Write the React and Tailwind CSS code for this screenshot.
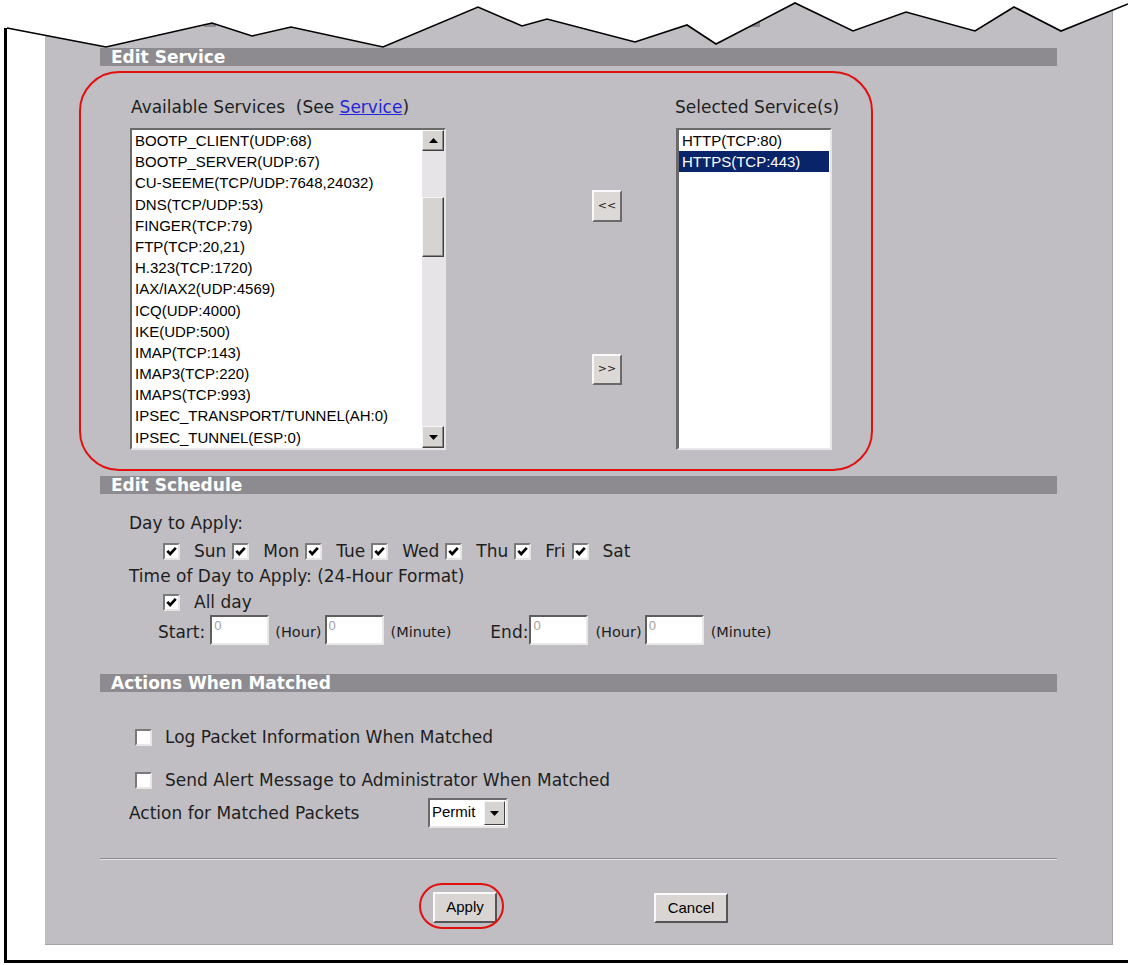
import React from "react";

const services = [
  "BOOTP_CLIENT(UDP:68)",
  "BOOTP_SERVER(UDP:67)",
  "CU-SEEME(TCP/UDP:7648,24032)",
  "DNS(TCP/UDP:53)",
  "FINGER(TCP:79)",
  "FTP(TCP:20,21)",
  "H.323(TCP:1720)",
  "IAX/IAX2(UDP:4569)",
  "ICQ(UDP:4000)",
  "IKE(UDP:500)",
  "IMAP(TCP:143)",
  "IMAP3(TCP:220)",
  "IMAPS(TCP:993)",
  "IPSEC_TRANSPORT/TUNNEL(AH:0)",
  "IPSEC_TUNNEL(ESP:0)",
];

const LAB = "font-['DejaVu_Sans',sans-serif] text-[17px] leading-[20px] text-[#1e1e1e] whitespace-nowrap";
const SMALL = "font-['DejaVu_Sans',sans-serif] text-[14.5px] leading-[20px] text-[#1e1e1e] whitespace-nowrap";

function Header({ children, top }) {
  return (
    <div
      className={
        "ml-[55px] w-[957px] h-[18px] shrink-0 bg-[#8d8b8f] pl-[11px] text-white font-bold text-[17px] leading-[18px] font-['DejaVu_Sans',sans-serif] whitespace-nowrap " +
        top
      }
    >
      {children}
    </div>
  );
}

function Checkbox({ checked }) {
  return (
    <div className="w-[17px] h-[17px] shrink-0 bg-white border-2 border-t-[#7a7a7a] border-l-[#7a7a7a] border-r-[#e6e6e6] border-b-[#e6e6e6] flex items-center justify-center">
      {checked && (
        <svg width="11" height="11" viewBox="0 0 11 11">
          <path d="M1.3 4.8 L4.2 8 L9.8 1.8" fill="none" stroke="#000" strokeWidth="2.7" />
        </svg>
      )}
    </div>
  );
}

function Arrow({ up }) {
  return (
    <svg width="9" height="5" viewBox="0 0 9 5">
      {up ? <path d="M0 5 L4.5 0 L9 5 Z" fill="#000" /> : <path d="M0 0 L4.5 5 L9 0 Z" fill="#000" />}
    </svg>
  );
}

function ScrollBtn({ up, h }) {
  return (
    <div
      className={
        "w-[22px] shrink-0 bg-[#d6d3d0] border border-t-[#f6f6f6] border-l-[#f6f6f6] border-r-[#404040] border-b-[#404040] shadow-[inset_-1px_-1px_0_#8a8a8a] flex items-center justify-center " +
        h
      }
    >
      <Arrow up={up} />
    </div>
  );
}

function TextBox({ className }) {
  return (
    <div
      className={
        "w-[59px] h-[30px] shrink-0 bg-white border-2 border-t-[#5e5e5e] border-l-[#5e5e5e] border-r-[#e8e8e8] border-b-[#e8e8e8] pl-[2px] pt-[1px] font-['Liberation_Sans',sans-serif] text-[13px] leading-[16px] text-[#a0a0a0] " +
        className
      }
    >
      0
    </div>
  );
}

function SmallBtn({ children, h }) {
  return (
    <div
      className={
        "w-[30px] bg-[#dbd8d5] border-2 border-t-[#fafafa] border-l-[#fafafa] border-r-[#6a6a6a] border-b-[#6a6a6a] flex items-center justify-center font-['DejaVu_Sans',sans-serif] text-[11px] text-[#222] " +
        h
      }
    >
      {children}
    </div>
  );
}

function Torn() {
  const pts = [
    [7, 28],
    [106, 47],
    [212, 23],
    [252, 36],
    [291, 27],
    [383, 47],
    [478, 7],
    [522, 26],
    [547, 19],
    [635, 42],
    [687, 25],
    [716, 44],
    [795, 3],
    [853, 31],
    [906, 12],
    [975, 31],
    [1014, 7],
    [1061, 31],
    [1128, 4],
  ];
  const line = pts.map((p) => p.join(",")).join(" ");
  const poly = "0,0 1128,0 " + [...pts].reverse().map((p) => p.join(",")).join(" ") + " 0,28";
  return (
    <svg className="absolute top-0 left-0 pointer-events-none" width="1128" height="52" viewBox="0 0 1128 52">
      <rect x="204" y="21" width="12" height="6" fill="#8d8b8f" />
      <rect x="748" y="21" width="12" height="6" fill="#8d8b8f" />
      <polygon points={poly} fill="#ffffff" />
      <polyline points={line} fill="none" stroke="#000" strokeWidth="1.6" strokeLinejoin="miter" />
    </svg>
  );
}

export default function App() {
  return (
    <div className="relative w-[1128px] h-[965px] bg-white overflow-hidden">
      <div className="ml-[4px] w-[1124px] h-[963px] border-l-[3px] border-b-[3px] border-black">
        <div className="ml-[38px] w-[1068px] h-[945px] bg-[#c0bec3] border-r border-b border-[#a6a4a8] flex flex-col">
          <Header top="mt-[48px]">Edit Service</Header>

          <div className="mt-[5px] ml-[34px] w-[794px] h-[400px] shrink-0 border-2 border-[#e20f0f] rounded-[40px] flex items-start pt-[24px] pl-[49px]">
            <div className="w-[316px] shrink-0 flex flex-col">
              <div className={LAB + " pl-[1px]"}>
                Available Services&nbsp; (See{" "}
                <span className="text-[#2424d8] underline">Service</span>)
              </div>
              <div className="mt-[11px] w-[316px] h-[322px] bg-white border-2 border-t-[#6a6a6a] border-l-[#6a6a6a] border-r-[#e6e6e6] border-b-[#e6e6e6] flex">
                <div className="flex-1 flex flex-col">
                  {services.map((s) => (
                    <div
                      key={s}
                      className="h-[21.2px] leading-[21.2px] pl-[3px] font-['Liberation_Sans',sans-serif] text-[15px] text-black whitespace-nowrap"
                    >
                      {s}
                    </div>
                  ))}
                </div>
                <div className="w-[22px] flex flex-col bg-[#e6e4e7]">
                  <ScrollBtn up h="h-[21px]" />
                  <div className="h-[46px]" />
                  <div className="w-[22px] h-[60px] bg-[#d6d3d0] border border-t-[#f6f6f6] border-l-[#f6f6f6] border-r-[#404040] border-b-[#404040] shadow-[inset_-1px_-1px_0_#8a8a8a]" />
                  <div className="flex-1" />
                  <ScrollBtn h="h-[22px]" />
                </div>
              </div>
            </div>

            <div className="ml-[146px] w-[30px] shrink-0 flex flex-col">
              <SmallBtn h="mt-[93px] h-[32px]">&lt;&lt;</SmallBtn>
              <SmallBtn h="mt-[132px] h-[31px]">&gt;&gt;</SmallBtn>
            </div>

            <div className="ml-[53px] shrink-0 flex flex-col">
              <div className={LAB}>Selected Service(s)</div>
              <div className="mt-[11px] ml-[1px] w-[156px] h-[322px] bg-white border-2 border-l-[3px] border-t-[#6a6a6a] border-l-[#6a6a6a] border-r-[#e6e6e6] border-b-[#e6e6e6] flex flex-col pr-[1px]">
                <div className="h-[21px] leading-[21px] pl-[3px] font-['Liberation_Sans',sans-serif] text-[15px] text-black whitespace-nowrap">
                  HTTP(TCP:80)
                </div>
                <div className="h-[21px] leading-[21px] pl-[3px] bg-[#0a246a] font-['Liberation_Sans',sans-serif] text-[15px] text-white whitespace-nowrap">
                  HTTPS(TCP:443)
                </div>
              </div>
            </div>
          </div>

          <Header top="mt-[5px]">Edit Schedule</Header>

          <div className={LAB + " mt-[19px] ml-[84px]"}>Day to Apply:</div>

          <div className="mt-[8px] ml-[118px] h-[20px] flex items-center">
            {["Sun", "Mon", "Tue", "Wed", "Thu", "Fri", "Sat"].map((d) => (
              <div key={d} className="flex items-center mr-[6px]">
                <Checkbox checked />
                <span className={LAB + " ml-[14px]"}>{d}</span>
              </div>
            ))}
          </div>

          <div className={LAB + " mt-[5px] ml-[84px]"}>Time of Day to Apply: (24-Hour Format)</div>

          <div className="mt-[6px] ml-[118px] h-[20px] flex items-center">
            <Checkbox checked />
            <span className={LAB + " ml-[14px]"}>All day</span>
          </div>

          <div className="mt-[3px] ml-[113px] h-[30px] flex items-center">
            <span className={LAB + " pt-[3px]"}>Start:</span>
            <TextBox className="ml-[5px]" />
            <span className={SMALL + " ml-[6px] pt-[3px]"}>(Hour)</span>
            <TextBox className="ml-[3px]" />
            <span className={SMALL + " ml-[7px] pt-[3px]"}>(Minute)</span>
            <span className={LAB + " ml-[39px] pt-[3px]"}>End:</span>
            <TextBox className="ml-[1px]" />
            <span className={SMALL + " ml-[7px] pt-[3px]"}>(Hour)</span>
            <TextBox className="ml-[3px]" />
            <span className={SMALL + " ml-[7px] pt-[3px]"}>(Minute)</span>
          </div>

          <Header top="mt-[29px]">Actions When Matched</Header>

          <div className="mt-[35px] ml-[90px] h-[20px] flex items-center">
            <Checkbox />
            <span className={LAB + " ml-[13px]"}>Log Packet Information When Matched</span>
          </div>

          <div className="mt-[23px] ml-[90px] h-[20px] flex items-center">
            <Checkbox />
            <span className={LAB + " ml-[13px]"}>Send Alert Message to Administrator When Matched</span>
          </div>

          <div className="mt-[8px] ml-[84px] h-[30px] flex items-center">
            <span className={LAB + " w-[299px]"}>Action for Matched Packets</span>
            <div className="w-[80px] h-[30px] bg-white border-2 border-t-[#6a6a6a] border-l-[#6a6a6a] border-r-[#e6e6e6] border-b-[#e6e6e6] flex items-stretch">
              <div className="flex-1 pl-[2px] font-['Liberation_Sans',sans-serif] text-[15px] leading-[24px] text-black">Permit</div>
              <div className="w-[21px] my-[1px] mr-[1px] bg-[#d6d3d0] border border-t-[#f6f6f6] border-l-[#f6f6f6] border-r-[#404040] border-b-[#404040] flex items-center justify-center">
                <Arrow />
              </div>
            </div>
          </div>

          <div className="mt-[30px] ml-[55px] w-[957px] h-[2px] border-t border-t-[#8c8a8e] border-b border-b-[#e4e2e6]" />

          <div className="mt-[32px] flex items-start">
            <div className="relative ml-[388px]">
              <div className="w-[64px] h-[31px] bg-[#d8d5d2] border-2 border-t-[#fafafa] border-l-[#fafafa] border-r-[#555555] border-b-[#555555] flex items-center justify-center font-['Liberation_Sans',sans-serif] text-[15px] text-black">
                Apply
              </div>
              <div className="absolute left-[-14px] top-[-9px] w-[85px] h-[46px] border-[2.5px] border-[#e20f0f] rounded-[24px]" />
            </div>
            <div className="ml-[157px] mt-[1px] w-[74px] h-[30px] bg-[#d8d5d2] border-2 border-t-[#fafafa] border-l-[#fafafa] border-r-[#555555] border-b-[#555555] flex items-center justify-center font-['Liberation_Sans',sans-serif] text-[15px] text-black">
              Cancel
            </div>
          </div>
        </div>
      </div>
      <Torn />
    </div>
  );
}
